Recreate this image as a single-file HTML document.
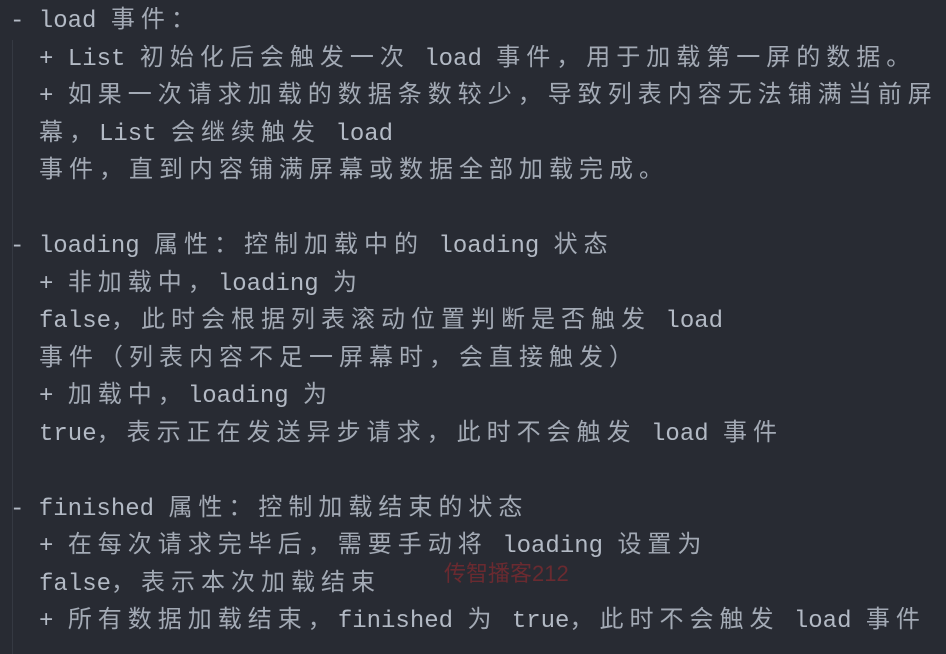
<!DOCTYPE html>
<html><head><meta charset="utf-8"><style>
html,body{margin:0;padding:0;}
body{width:946px;height:654px;background:#282b33;overflow:hidden;position:relative;font-family:"Liberation Mono","Noto Sans CJK SC",monospace;font-size:24px;color:#b3bac5;}
.wrap{position:absolute;left:0;top:3px;}
.l{position:absolute;left:10px;white-space:pre;line-height:37.5px;height:37.5px;}
.i{left:39px;}
.c{letter-spacing:6px;color:#a3aab5;}
.g{position:absolute;left:12px;top:40px;width:1px;height:614px;background:#353942;}
.w{position:absolute;left:444px;top:556px;font-family:"Liberation Sans","Noto Sans CJK SC",sans-serif;font-size:22px;color:#6a2a30;}
</style></head><body>
<div class="g"></div>
<div class="wrap">
<div class="l" style="top:0">- load <span class="c">事件：</span></div>
<div class="l i" style="top:37.5px">+ List <span class="c">初始化后会触发一次</span> load <span class="c">事件，用于加载第一屏的数据。</span></div>
<div class="l i" style="top:75px">+ <span class="c">如果一次请求加载的数据条数较少，导致列表内容无法铺满当前屏</span></div>
<div class="l i" style="top:112.5px"><span class="c">幕，</span>List <span class="c">会继续触发</span> load</div>
<div class="l i" style="top:150px"><span class="c">事件，直到内容铺满屏幕或数据全部加载完成。</span></div>
<div class="l" style="top:225px">- loading <span class="c">属性：控制加载中的</span> loading <span class="c">状态</span></div>
<div class="l i" style="top:262.5px">+ <span class="c">非加载中，</span>loading <span class="c">为</span></div>
<div class="l i" style="top:300px">false<span class="c">，此时会根据列表滚动位置判断是否触发</span> load</div>
<div class="l i" style="top:337.5px"><span class="c">事件（列表内容不足一屏幕时，会直接触发）</span></div>
<div class="l i" style="top:375px">+ <span class="c">加载中，</span>loading <span class="c">为</span></div>
<div class="l i" style="top:412.5px">true<span class="c">，表示正在发送异步请求，此时不会触发</span> load <span class="c">事件</span></div>
<div class="l" style="top:487.5px">- finished <span class="c">属性：控制加载结束的状态</span></div>
<div class="l i" style="top:525px">+ <span class="c">在每次请求完毕后，需要手动将</span> loading <span class="c">设置为</span></div>
<div class="l i" style="top:562.5px">false<span class="c">，表示本次加载结束</span></div>
<div class="l i" style="top:600px">+ <span class="c">所有数据加载结束，</span>finished <span class="c">为</span> true<span class="c">，此时不会触发</span> load <span class="c">事件</span></div>
</div>
<div class="w">传智播客212</div>
</body></html>
